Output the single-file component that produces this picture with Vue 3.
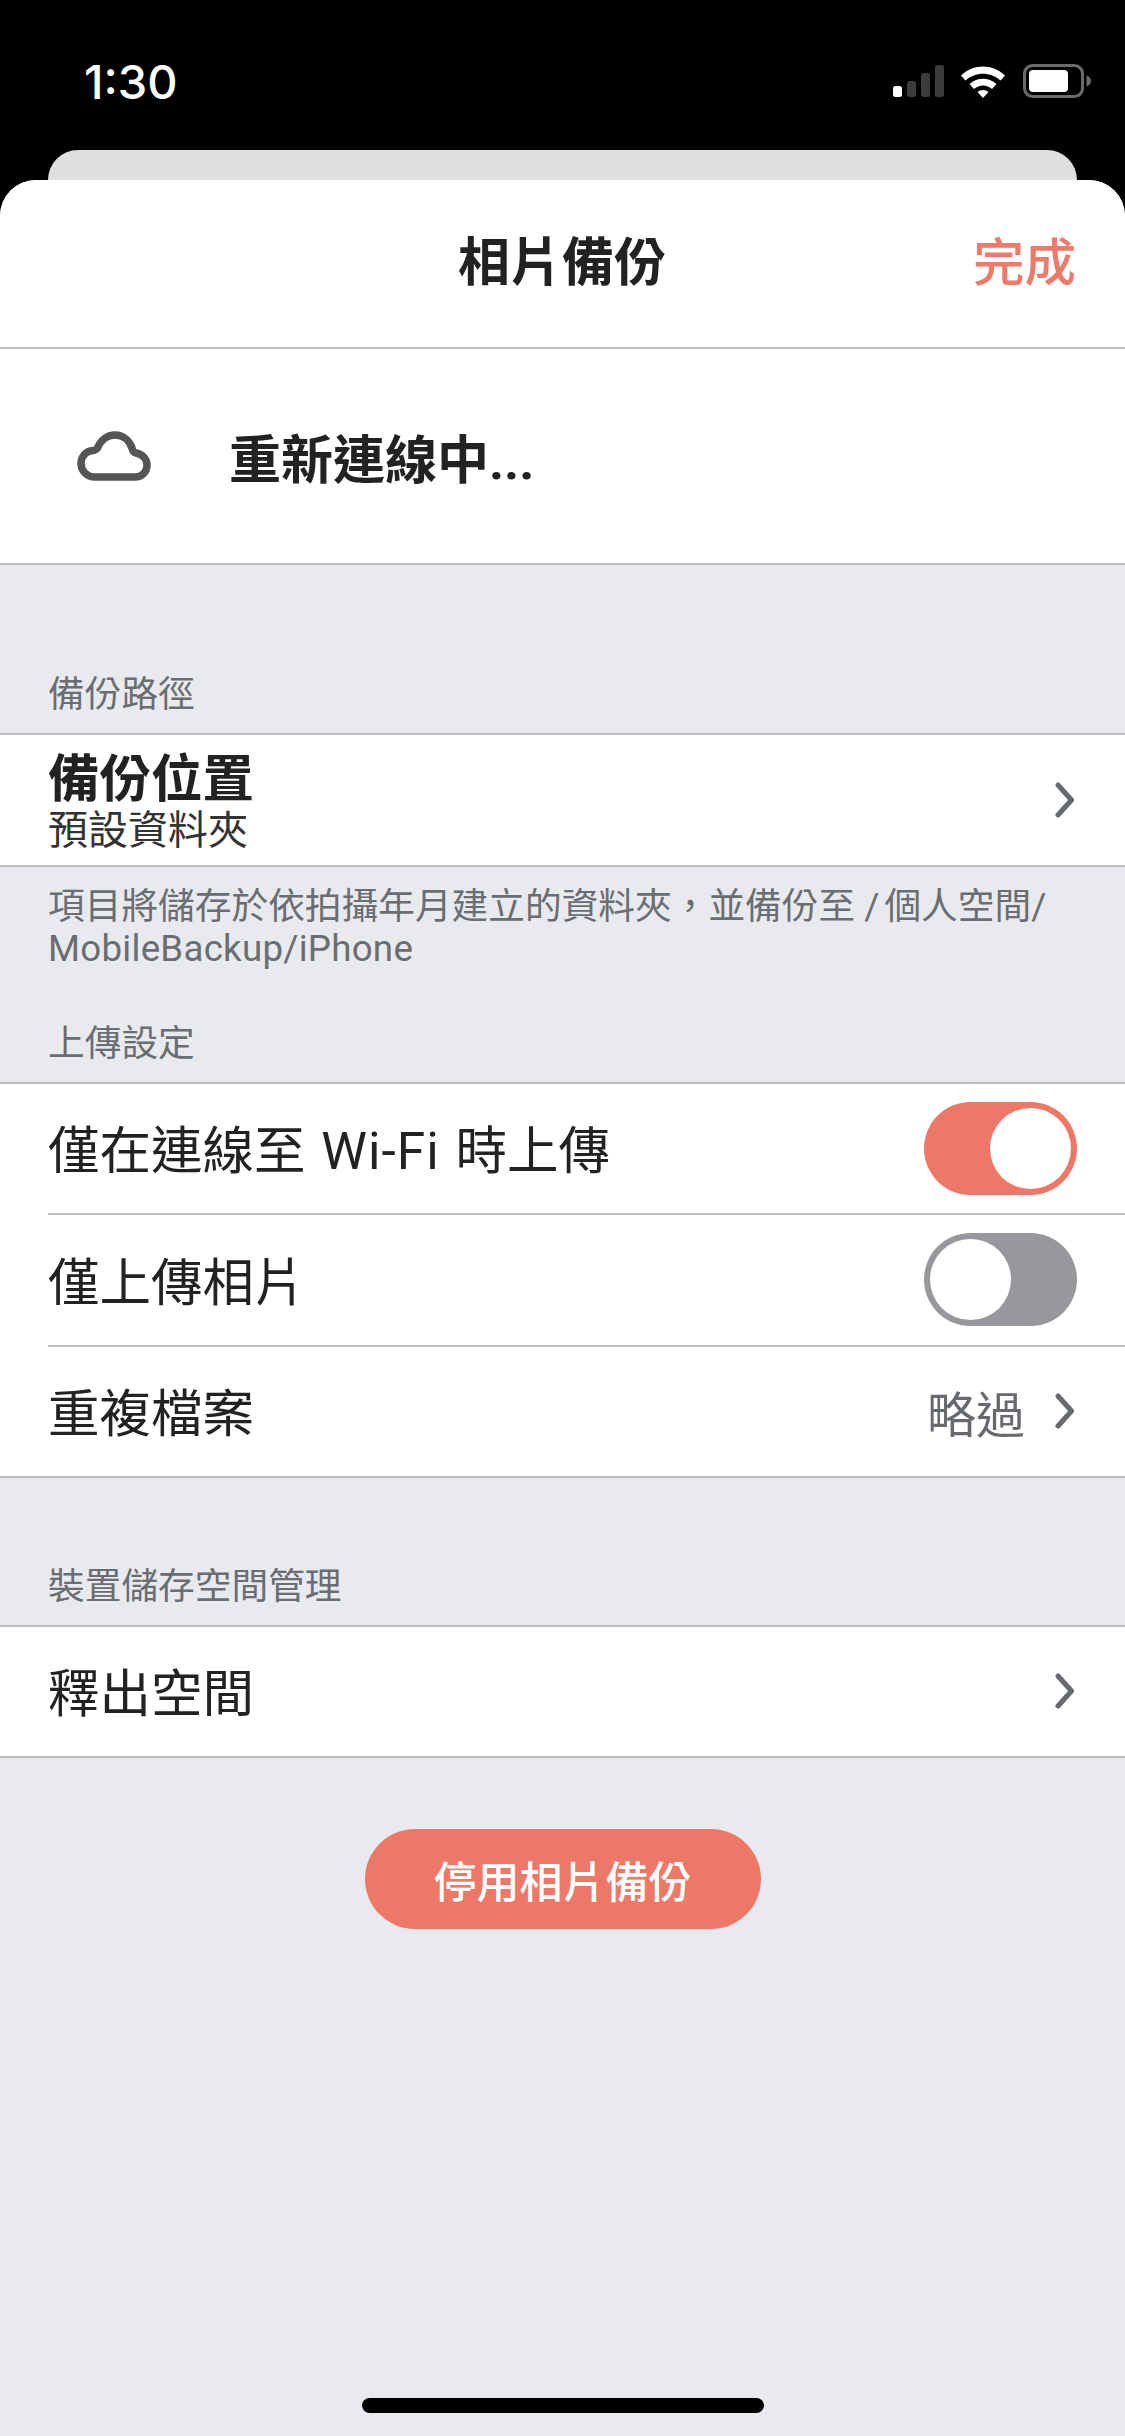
<template>
  <div class="phone">
    <div class="status-bar">
      <span class="time">1:30</span>
      <div class="status-icons">
        <svg class="signal" width="52" height="32" viewBox="0 0 52 32">
          <rect x="0" y="21" width="9" height="11" rx="2.5" fill="#fff" />
          <rect x="14" y="16" width="9" height="16" rx="2.5" fill="#3c3c3c" />
          <rect x="28" y="8" width="9" height="24" rx="2.5" fill="#3c3c3c" />
          <rect x="42" y="0" width="9" height="32" rx="2.5" fill="#3c3c3c" />
        </svg>
        <svg class="wifi" width="46" height="34" viewBox="0 0 46 34">
          <path d="M1 11.5C13.5 -0.5 32.5 -0.5 45 11.5L40.6 16.4C30.6 7.4 15.4 7.4 5.4 16.4Z" fill="#fff" />
          <path d="M9.5 20C17.5 13 28.500 13 36.500 20L32 25C26.500 20.200 19.500 20.200 14 25Z" fill="#fff" />
          <path d="M17.500 28C20.500 25.300 25.500 25.300 28.500 28L23 34Z" fill="#fff" />
        </svg>
        <svg class="battery" width="70" height="34" viewBox="0 0 70 34">
          <rect x="1.500" y="1.500" width="58" height="31" rx="8" fill="none" stroke="#6b6b6b" stroke-width="3" />
          <rect x="6" y="6" width="39" height="22" rx="4" fill="#fff" />
          <path d="M63.500 11.500C66.500 12.500 68 14.500 68 17C68 19.500 66.500 21.500 63.500 22.500Z" fill="#6b6b6b" />
        </svg>
      </div>
    </div>

    <div class="back-card"></div>

    <div class="sheet">
      <header class="nav">
        <span></span>
        <h1 class="nav-title">相片備份</h1>
        <span class="nav-done">完成</span>
      </header>

      <div class="connection">
        <svg class="cloud" width="74" height="50" viewBox="0 0 74 50">
          <path
            d="M18 46C10 46 4 40 4 32.500C4 25.500 9 20 16 19.500C18 19.300 19.500 18.500 20.500 17C23.500 9.500 30 4 38 4C46.500 4 53 10 55.500 18.500C56 20.500 57 21.500 59 22C65.500 23.300 70 28 70 34.200C70 40.800 65 46 58 46Z"
            fill="none"
            stroke="#555"
            stroke-width="7.500"
            stroke-linejoin="round"
          />
        </svg>
        <span class="connection-text">重新連線中...</span>
      </div>

      <div class="section-label first">備份路徑</div>
      <div class="group">
        <div class="row">
          <div class="row-stack">
            <span class="row-title">備份位置</span>
            <span class="row-sub">預設資料夾</span>
          </div>
          <svg class="chevron" width="22" height="36" viewBox="0 0 22 36">
            <path d="M3 3L16.500 18L3 33" />
          </svg>
        </div>
      </div>
      <p class="footnote">項目將儲存於依拍攝年月建立的資料夾，並備份至 <span class="slash">/</span>個人空間/<br /><span class="path-name">MobileBackup/iPhone</span></p>

      <div class="section-label second">上傳設定</div>
      <div class="group">
        <div class="row">
          <span class="row-text">僅在連線至 <span class="wifi-name">Wi-Fi</span> 時上傳</span>
          <div class="toggle on"><div class="thumb"></div></div>
        </div>
        <div class="row">
          <span class="row-text">僅上傳相片</span>
          <div class="toggle"><div class="thumb"></div></div>
        </div>
        <div class="row">
          <span class="row-text">重複檔案</span>
          <div class="row-end">
            <span class="row-value">略過</span>
            <svg class="chevron" width="22" height="36" viewBox="0 0 22 36">
              <path d="M3 3L16.500 18L3 33" />
            </svg>
          </div>
        </div>
      </div>

      <div class="section-label third">裝置儲存空間管理</div>
      <div class="group">
        <div class="row">
          <span class="row-text">釋出空間</span>
          <svg class="chevron" width="22" height="36" viewBox="0 0 22 36">
            <path d="M3 3L16.500 18L3 33" />
          </svg>
        </div>
      </div>

      <button class="disable-btn">停用相片備份</button>

      <div class="home-indicator"></div>
    </div>
  </div>
</template>

<script setup>
</script>

<style>
html,
body {
  margin: 0;
  background: #000;
}
</style>

<style scoped>
.phone {
  width: 1125px;
  height: 2436px;
  display: flex;
  flex-direction: column;
  overflow: hidden;
  background: #000;
  font-family: Roboto, "Noto Sans CJK TC", sans-serif;
}

.status-bar {
  height: 150px;
  flex: none;
  display: flex;
  justify-content: space-between;
  padding: 58px 32px 0 84px;
  box-sizing: border-box;
}

.time {
  color: #fff;
  font-family: Inter, sans-serif;
  font-size: 47px;
  font-weight: 500;
  line-height: 48px;
}

.status-icons {
  display: flex;
  align-items: flex-start;
  padding-top: 6px;
}

.signal {
  margin-top: 1px;
}

.wifi {
  margin-left: 15px;
}

.battery {
  margin-left: 17px;
}

.back-card {
  flex: none;
  height: 30px;
  margin: 0 48px;
  background: #dfdfdf;
  border-radius: 30px 30px 0 0;
}

.sheet {
  flex: 1;
  display: flex;
  flex-direction: column;
  background: #e9eaee;
  border-radius: 36px 36px 0 0;
  overflow: hidden;
  color: #222;
}

.nav {
  flex: none;
  height: 169px;
  box-sizing: border-box;
  display: grid;
  grid-template-columns: 1fr auto 1fr;
  align-items: center;
  padding: 0 49px 10px 48px;
  background: #fff;
  border-bottom: 2px solid #bcbcbe;
}

.nav-title {
  margin: 0;
  font-size: 52px;
  font-weight: 700;
  color: #222;
}

.nav-done {
  justify-self: end;
  font-size: 51.500px;
  font-weight: 500;
  color: #ee7a69;
}

.connection {
  flex: none;
  height: 216px;
  box-sizing: border-box;
  display: flex;
  align-items: center;
  background: #fff;
  border-bottom: 2px solid #bcbcbe;
  padding-left: 77px;
}

.cloud {
  flex: none;
}

.connection-text {
  margin-left: 78px;
  font-size: 52px;
  font-weight: 700;
  color: #222;
}

.section-label {
  flex: none;
  box-sizing: border-box;
  display: flex;
  align-items: flex-end;
  padding: 0 48px 16px;
  font-size: 36.700px;
  line-height: 44px;
  color: #6a6d71;
}

.section-label.first {
  height: 168px;
}

.section-label.second {
  height: 112px;
}

.section-label.third {
  height: 146.500px;
}

.group {
  flex: none;
  background: #fff;
  border-top: 2px solid #bcbcbe;
  border-bottom: 2px solid #bcbcbe;
}

.row {
  height: 129.500px;
  margin-left: 48px;
  padding-right: 48px;
  display: flex;
  align-items: center;
  justify-content: space-between;
}

.row + .row {
  border-top: 2px solid #bcbcbe;
}

.row-text {
  padding-bottom: 3px;
  font-size: 51.500px;
  word-spacing: 3px;
  color: #222;
}

.wifi-name {
  letter-spacing: 1px;
}

.row-stack {
  display: flex;
  flex-direction: column;
  padding-top: 11px;
}

.row-title {
  font-size: 51.500px;
  font-weight: 700;
  line-height: 52px;
  color: #222;
}

.row-sub {
  font-size: 40px;
  line-height: 50px;
  color: #333;
}

.row-end {
  display: flex;
  align-items: center;
  gap: 30px;
}

.row-value {
  font-size: 49px;
  color: #666a6e;
}

.chevron {
  flex: none;
}

.chevron path {
  fill: none;
  stroke: #66696d;
  stroke-width: 5;
  stroke-linecap: round;
  stroke-linejoin: round;
}

.footnote {
  flex: none;
  margin: 0;
  padding: 19px 48px 0;
  font-size: 36.700px;
  line-height: 42px;
  color: #6a6d71;
}

.slash {
  margin-right: 5px;
}

.path-name {
  letter-spacing: 0.25px;
}

.toggle {
  flex: none;
  width: 153px;
  height: 93px;
  box-sizing: border-box;
  padding: 6px;
  border-radius: 47px;
  background: #97989c;
  display: flex;
}

.toggle.on {
  background: #ee7868;
  justify-content: flex-end;
}

.thumb {
  width: 81px;
  height: 81px;
  border-radius: 50%;
  background: #fff;
}

.disable-btn {
  flex: none;
  align-self: center;
  width: 396px;
  height: 100px;
  margin-top: 71px;
  border: none;
  border-radius: 50px;
  background: #ee7868;
  color: #fff;
  font-family: inherit;
  font-size: 43px;
  font-weight: 500;
}

.home-indicator {
  flex: none;
  align-self: center;
  width: 402px;
  height: 15px;
  margin-top: auto;
  margin-bottom: 23px;
  border-radius: 8px;
  background: #000;
}
</style>
